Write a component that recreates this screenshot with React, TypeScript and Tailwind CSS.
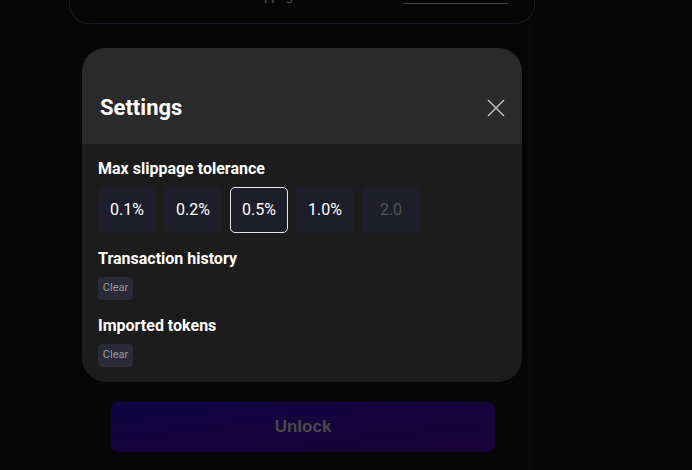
import React from "react";

export default function App() {
  const opts = [
    { v: "0.1%", sel: false },
    { v: "0.2%", sel: false },
    { v: "0.5%", sel: true },
    { v: "1.0%", sel: false },
  ];
  return (
    <div
      className="w-[692px] h-[470px] overflow-hidden bg-[#060606] relative"
      style={{ fontFamily: "Roboto, 'Liberation Sans', sans-serif" }}
    >
      <div className="ml-[70px] w-[460px] h-full border-r border-[#0c0c0e] flex flex-col items-start">
        {/* top card remnant */}
        <div className="ml-[-1px] w-[466px] h-[25px] mt-[-1px] shrink-0 rounded-b-[20px] border border-t-0 border-[#1c1c28] relative overflow-hidden">
          <div className="absolute left-[180px] top-[-10px] text-[13px] leading-[14px] text-[#555] whitespace-nowrap">
            Slippage tolerance:{" "}
            <span className="ml-[40px] inline-block w-[105px] border-b border-[#444]">&nbsp;</span>
          </div>
        </div>

        {/* modal */}
        <div className="ml-[12px] mt-[24px] w-[440px] rounded-[24px] overflow-hidden bg-[#1c1c1c] shrink-0">
          <div className="h-[96px] bg-[#2a2a2a] flex items-center justify-between pl-[18px] pr-[16px] pt-[22px]">
            <h2 className="text-[22px] font-bold text-white">Settings</h2>
            <svg width="20" height="20" viewBox="0 0 20 20" className="mt-[1px]">
              <path d="M2 2 L18 18 M18 2 L2 18" stroke="#c8c8c8" strokeWidth="1.4" fill="none" />
            </svg>
          </div>
          <div className="px-[16px] pt-[16px] pb-[15px]">
            <div className="text-[16px] font-bold text-white leading-[18px]">Max slippage tolerance</div>
            <div className="flex gap-[8px] mt-[9px]">
              {opts.map((o) => (
                <div
                  key={o.v}
                  className={`w-[58px] h-[46px] rounded-[5px] bg-[#1e1e2a] flex items-center justify-center text-[16px] text-white ${
                    o.sel ? "border border-[#e6e6e6]" : ""
                  }`}
                >
                  {o.v}
                </div>
              ))}
              <div className="w-[58px] h-[46px] rounded-[5px] bg-[#1e1e2a] flex items-center justify-center text-[16px] text-[#555]">
                2.0
              </div>
            </div>
            <div className="text-[16px] font-bold text-white leading-[18px] mt-[17px]">Transaction history</div>
            <div className="mt-[9px] w-[35px] h-[23px] rounded-[4px] bg-[#2a2a38] flex items-center justify-center text-[11px] text-[#9a9a9a]">
              Clear
            </div>
            <div className="text-[16px] font-bold text-white leading-[18px] mt-[17px]">Imported tokens</div>
            <div className="mt-[9px] w-[35px] h-[23px] rounded-[4px] bg-[#2a2a38] flex items-center justify-center text-[11px] text-[#9a9a9a]">
              Clear
            </div>
          </div>
        </div>

        {/* unlock */}
        <div
          className="ml-[41px] mt-[20px] w-[384px] h-[50px] rounded-[7px] bg-gradient-to-br from-[#0d0545] to-[#1a0237] flex items-center justify-center text-[17px] font-bold text-[#4a4a4a]"
          style={{ fontFamily: "'Liberation Sans', Arial, sans-serif" }}
        >
          Unlock
        </div>
      </div>
    </div>
  );
}
